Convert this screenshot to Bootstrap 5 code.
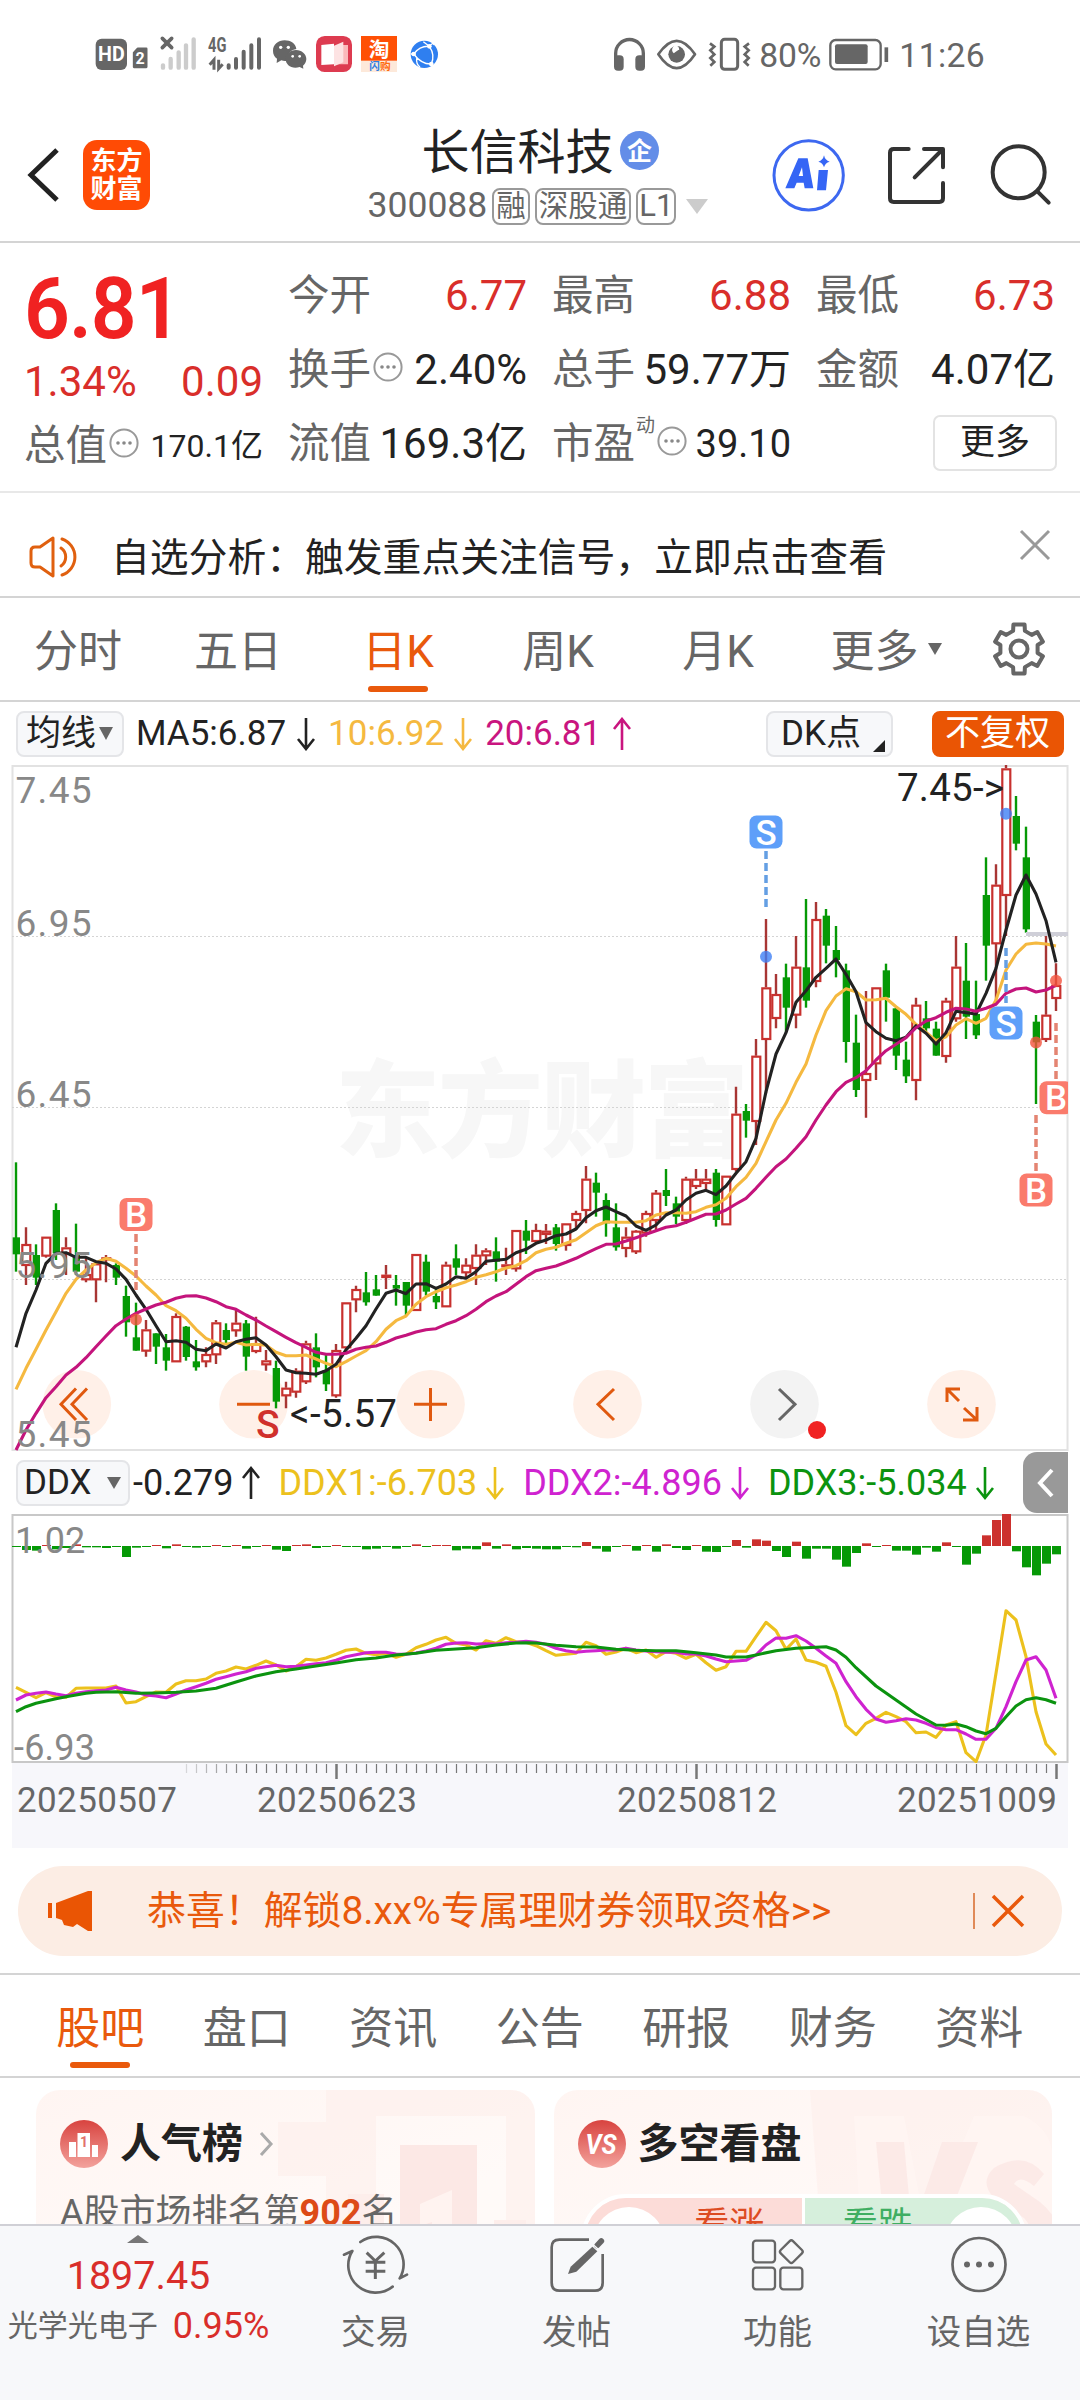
<!DOCTYPE html>
<html lang="zh-CN">
<head>
<meta charset="utf-8">
<meta name="viewport" content="width=device-width, initial-scale=1">
<title>长信科技 300088</title>
<link rel="stylesheet" href="https://cdn.jsdelivr.net/npm/bootstrap@5.3.0/dist/css/bootstrap.min.css">
<style>
:root{--ink:#222;--sub:#666;--up:#d92e2a;--brand:#e9590c;--line:#d4d4d4}
body{font-family:Roboto,"Noto Sans CJK SC",sans-serif;background:#fff;color:var(--ink);line-height:1;margin:0}
svg{display:block;overflow:visible;flex:none}
.page{width:1080px;height:2400px;overflow:hidden}
.nw{white-space:nowrap}
.c-sub{color:var(--sub)}.c-up{color:var(--up)}.c-brand{color:var(--brand)}
.sec{flex:none;border-bottom:2px solid var(--line)}
.statusbar{height:108px;flex:none}
.head{height:135px;display:grid;grid-template-columns:335px 1fr 335px}
.applogo{width:67px;height:70px;border-radius:14px;background:#ff4b05;color:#fff;font-size:26px;font-weight:700;line-height:28px}
.title{font-size:48px;height:54px;line-height:54px}
.tagbox{border:2px solid #999;border-radius:8px;height:37px;font-size:29.5px;line-height:32px;padding:0 2px;color:var(--sub)}
.code{font-size:35.5px;color:var(--sub)}
.tri{width:0;height:0;border:solid transparent;border-top-color:currentColor;border-bottom-width:0}
.quote{height:250px;padding:16px 26px 0 24px;display:grid;grid-template-columns:repeat(4,238px);column-gap:26px;border-bottom:2px solid #e8e8e8}
.qcell{height:74px;display:flex;align-items:center;justify-content:space-between;font-size:42px;white-space:nowrap}
.qcell>span:last-child:not(.bigprice){margin-right:-1px}
.qcell .lb{font-size:41.5px;color:var(--sub);display:flex;align-items:center}
.qcell .lb svg{margin:-6px 0 0 2px}
.bigprice{font-size:85px;font-weight:600;color:#f02222;transform:scaleX(.945);transform-origin:0 50%;letter-spacing:-1px;padding-top:8px}
.morebtn{width:124px;height:56px;border:2px solid #e3e3e3;border-radius:7px;font-size:35px;padding:0;line-height:50px;color:var(--ink);background:#fff}
.alertbar{height:105px;padding:0 30px 0 29px}
.alertbar .msg{font-size:38.8px;margin-left:31px;padding-top:28px}
.ktabs{height:104px}
.ktabs .nav-link,.btabs .nav-link{padding:6px 0 0;font-size:44px;color:var(--sub);height:100%;display:flex;align-items:center;justify-content:center;position:relative}
.ktabs .nav-link{width:160px;left:-2px}
.nav-link.active{color:var(--brand)!important}
.nav-link.active::after{content:"";position:absolute;left:50%;margin-left:-30px;bottom:8px;width:60px;height:6px;border-radius:3px;background:var(--brand)}
.indrow{height:63px;flex:none;font-size:35px;padding-left:16px;white-space:nowrap}
.chip{height:46px;border:2px solid #e4e5e8;border-radius:8px;background:#f7f8fa;display:flex;align-items:center}
.side{width:45px;height:61px;background:#999;border-radius:14px 0 0 14px}
.axisbox{height:85px;flex:none;margin:0 12px;background:#f7f7fb}
.promo{height:90px;margin:18px 18px 17px;border-radius:45px;background:#fcede4;flex:none;padding:0 38px 0 29px;color:var(--brand);font-size:38.9px}
.btabs{height:105px;padding:0 27px;border-top:2px solid var(--line)}
.btabs .nav-link{width:146.5px}
.feed{flex:1 1 0;min-height:0;overflow:hidden;padding:12px 28px 0 36px;gap:19px}
.fcard{width:499px;height:240px;border-radius:24px;background:linear-gradient(160deg,#fff5f2,#fffaf8 60%);position:relative;overflow:hidden;padding:30px 24px}
.fcard .deco{position:absolute;left:0;top:0}
.fcard .ttl{font-size:41px;font-weight:700;margin-left:12px}
.vote{width:446px;height:90px;border-radius:45px;border:4px solid #fff;overflow:hidden;font-size:35px;position:relative;margin:26px 0 0 3px;display:flex}
.vote div{flex:1;padding-top:10px}
.vote .up{background:#fcdcd8;color:#dd4b22;text-align:center;padding-left:72px;border-right:3px solid #fff}
.vote .dn{background:#d6efdc;color:#3fae62;text-align:center;padding-right:72px}
.vote i{position:absolute;width:72px;height:72px;border-radius:50%;background:#fff;top:9px}
.dock{height:176px;flex:none;background:#f7f8fa;border-top:2px solid #d0d0d6}
.dock .idx{width:275px;color:var(--up)}
.dock .item{width:201px;color:var(--sub);font-size:34.5px}
.dock svg{stroke:#666}
</style>
</head>
<body>
<svg width="0" height="0" class="position-absolute">
  <symbol id="dn" viewBox="0 0 20 34"><path d="M10 1V32M2 22L10 32L18 22" fill="none" stroke="currentColor" stroke-width="2.6"/></symbol>
  <symbol id="upa" viewBox="0 0 20 34"><path d="M10 33V2M2 12L10 2L18 12" fill="none" stroke="currentColor" stroke-width="2.6"/></symbol>
  <symbol id="info" viewBox="0 0 30 30"><circle cx="15" cy="15" r="13.6" fill="none" stroke="#999" stroke-width="2"/><g fill="#888"><circle cx="9" cy="15" r="1.8"/><circle cx="15" cy="15" r="1.8"/><circle cx="21" cy="15" r="1.8"/></g></symbol>
</svg>
<div class="page d-flex flex-column">

<header class="statusbar d-flex justify-content-between">
  <svg width="370" height="60" viewBox="0 0 1110 180" style="margin:25px 0 0 80px">
    <rect x="47" y="41" width="94" height="94" rx="18" fill="#666"/>
    <text x="94" y="109" font-size="58" font-weight="700" fill="#fff" text-anchor="middle" textLength="80" lengthAdjust="spacingAndGlyphs">HD</text>
    <path d="M173 71H199V126H162V83Z" fill="#666" stroke="#666" stroke-width="7" stroke-linejoin="round"/>
    <text x="180" y="116" font-size="48" font-weight="700" fill="#fff" text-anchor="middle">2</text>
    <path d="M247 40L275 68M275 40L247 68" stroke="#666" stroke-width="11" stroke-linecap="round"/>
    <g stroke="#ccc" stroke-width="13" stroke-linecap="round"><path d="M249 121V128M272 102V128M296 82V128M318 61V128M341 43V128"/></g>
    <text x="384" y="80" font-size="58" font-weight="700" fill="#666" textLength="55" lengthAdjust="spacingAndGlyphs">4G</text>
    <path d="M389 119L402 104V134M416 104V131L428 118" fill="none" stroke="#666" stroke-width="9"/>
    <g stroke="#666" stroke-width="12" stroke-linecap="round"><path d="M446 121V128M468 102V128M491 80V128M514 61V128M537 43V128"/></g>
    <path d="M614 46c-20 0-35 13-35 31 0 10 4 18 12 24l-1 13 14-8c6 2 13 2 17 1 0-22 13-33 28-35-2-16-17-26-35-26Z" fill="#666"/>
    <path d="M648 75c17 0 31 12 31 27 0 9-5 16-10 20l1 9-11-5c-24 7-42-6-42-24 0-15 14-27 31-27Z" fill="#666"/>
    <g fill="#fff"><circle cx="602" cy="67" r="5"/><circle cx="625" cy="67" r="5"/><circle cx="638" cy="94" r="4"/><circle cx="659" cy="94" r="4"/></g>
    <rect x="708" y="33" width="108" height="108" rx="26" fill="#dd3b50"/>
    <path d="M724 60L762 56V118L724 120Z" fill="#fff"/><path d="M778 60H804V118H768Z" fill="#fbb9bb"/><path d="M762 62L790 50V112L762 124Z" fill="#fde3e3"/>
    <rect x="843" y="33" width="108" height="108" fill="#fde9da"/><rect x="843" y="33" width="108" height="74" fill="#ff5005"/>
    <text x="897" y="95" font-size="62" font-weight="700" fill="#fff" text-anchor="middle">淘</text>
    <text x="868" y="136" font-size="32" font-weight="700" fill="#2f7de0">闪</text><text x="900" y="136" font-size="32" font-weight="700" fill="#ff6a10">购</text>
    <circle cx="1033" cy="88" r="41" fill="#2f7ff0"/>
    <g fill="none" stroke="#fff" stroke-width="4"><path d="M1001 87Q1020 62 1048 64Q1066 90 1054 117Q1024 118 1001 87M1048 64Q1060 50 1062 60M1048 64L1030 50M1001 87H992M1054 117L1056 124M1010 100Q1008 118 1020 126"/></g>
    <g fill="#fff"><circle cx="1048" cy="64" r="7"/><circle cx="1001" cy="87" r="7"/><circle cx="1054" cy="117" r="7"/></g>
  </svg>
  <svg width="413" height="60" viewBox="0 0 1239 180" style="margin:20px 87px 0 0">
    <g fill="none" stroke="#666">
      <path d="M107 130V100a41 41 0 0 1 83 0V130" stroke-width="10"/>
      <path d="M235 103Q290 22 345 103Q290 186 235 103Z" stroke-width="8" stroke-linejoin="round"/>
      <rect x="424" y="58" width="49" height="90" rx="10" stroke-width="9"/>
      <path d="M390 70l13 10-12 11 12 12-12 11 12 12-12 11M507 70l-13 10 12 11-12 12 12 11-12 12 12 11" stroke-width="8"/>
      <rect x="751" y="60" width="151" height="88" rx="16" stroke-width="7"/>
      <path d="M919 82V126" stroke-width="11"/>
    </g>
    <g fill="#666"><rect x="102" y="106" width="29" height="46" rx="12"/><rect x="166" y="106" width="29" height="46" rx="12"/><circle cx="290" cy="103" r="25"/><rect x="765" y="73" width="98" height="59" rx="6"/></g>
    <path d="M283 98a8 10 0 1 1 12-8" fill="#fff" stroke="#fff" stroke-width="5"/>
    <g fill="#666" font-size="101"><text x="538" y="140" textLength="186">80%</text><text x="958" y="140" textLength="256">11:26</text></g>
  </svg>
</header>

<div class="sec head align-items-center">
  <div class="d-flex align-items-center" style="padding-left:27px">
    <svg width="34" height="54"><path d="M30 2L4 27L30 52" fill="none" stroke="#222" stroke-width="5"/></svg>
    <div class="applogo d-flex flex-column align-items-center justify-content-center" style="margin-left:22px"><span>东方</span><span>财富</span></div>
  </div>
  <div class="d-flex flex-column align-items-center">
    <div class="d-flex align-items-center nw title">长信科技
      <svg width="39" height="39" viewBox="0 0 39 39" style="margin:-5px 0 0 6px"><circle cx="19.500" cy="19.500" r="19.500" fill="#638de8"/><text x="19.500" y="29" font-size="25" font-weight="700" fill="#fff" text-anchor="middle">企</text></svg>
    </div>
    <div class="d-flex align-items-center nw" style="margin:8px 4px 0 0">
      <span class="code">300088</span><span class="tagbox" style="margin-left:5px">融</span><span class="tagbox" style="margin-left:5px">深股通</span><span class="tagbox" style="margin-left:5px;padding:0 1px;font-size:31px">L1</span>
      <span class="tri" style="border-width:15px 11px 0;color:#ccc;margin-left:10px"></span>
    </div>
  </div>
  <svg width="335" height="134" viewBox="495 264 1005 402">
    <circle cx="686" cy="466" r="104" fill="none" stroke="#3d68f0" stroke-width="9"/>
    <path d="M655 415H683L700 505H674L671 488H650L643 505H616ZM666 442L656 468H669ZM716 450H744L738 511H711Z" fill="#3565f5" fill-rule="evenodd"/>
    <path d="M732 406Q735 421 749 425Q735 429 732 442Q729 429 715 425Q729 421 732 406Z" fill="#3565f5"/>
    <g fill="none" stroke="#333" stroke-width="12" stroke-linecap="round" stroke-linejoin="round">
      <path d="M986 387H941Q930 387 930 398V535Q930 546 941 546H1078Q1089 546 1089 535V489M1032 387H1089V442M1086 390L1004 472"/>
      <circle cx="1316" cy="457" r="78"/><path d="M1372 514L1406 548"/>
    </g>
  </svg>
</div>

<section class="quote" style="flex:none">
  <div>
    <div class="qcell" style="height:92px"><span class="bigprice">6.81</span></div>
    <div class="qcell c-up" style="height:62px"><span>1.34%</span><span>0.09</span></div>
    <div class="qcell" style="height:62px;margin-top:2px"><span class="lb">总值<svg width="30" height="30"><use href="#info"/></svg></span><span style="font-size:32px">170.1亿</span></div>
  </div>
  <div>
    <div class="qcell"><span class="lb">今开</span><span class="c-up">6.77</span></div>
    <div class="qcell"><span class="lb">换手<svg width="30" height="30"><use href="#info"/></svg></span><span>2.40%</span></div>
    <div class="qcell"><span class="lb">流值</span><span>169.3亿</span></div>
  </div>
  <div>
    <div class="qcell"><span class="lb">最高</span><span class="c-up">6.88</span></div>
    <div class="qcell"><span class="lb">总手</span><span>59.77万</span></div>
    <div class="qcell"><span class="lb">市盈<small style="font-size:19px;margin:-38px 0 0 1px">动</small><svg width="30" height="30"><use href="#info"/></svg></span><span style="font-size:38px">39.10</span></div>
  </div>
  <div>
    <div class="qcell"><span class="lb">最低</span><span class="c-up">6.73</span></div>
    <div class="qcell"><span class="lb">金额</span><span>4.07亿</span></div>
    <div class="qcell justify-content-end"><button class="btn morebtn" style="margin:-3px -3px 0 0">更多</button></div>
  </div>
</section>

<section class="sec alertbar d-flex align-items-center">
  <svg width="51" height="44" viewBox="0 0 51 44" fill="none" stroke="#e0600f" stroke-width="3" stroke-linejoin="round" stroke-linecap="round" style="margin-top:25px"><path d="M24 3L11 12H6Q2 12 2 16V28Q2 32 6 32H11L24 41ZM32 13A11 11 0 0 1 32 31M33 4A19 19 0 0 1 33 40"/></svg>
  <span class="msg nw">自选分析：触发重点关注信号，立即点击查看</span>
  <svg class="ms-auto" width="30" height="30"><path d="M1 1L29 29M29 1L1 29" stroke="#999" stroke-width="3"/></svg>
</section>

<nav class="sec ktabs nav flex-nowrap">
  <a class="nav-link">分时</a><a class="nav-link">五日</a><a class="nav-link active">日K</a><a class="nav-link">周K</a><a class="nav-link">月K</a>
  <a class="nav-link" style="padding-left:16px">更多<span class="tri" style="border-width:12px 7.500px 0;margin:-6px 0 0 9px"></span></a>
  <div class="d-flex align-items-center justify-content-center flex-fill"><svg width="52" height="52" viewBox="-26 -26 52 52" fill="none" stroke="#666" stroke-width="4" stroke-linejoin="round" style="margin:-1px 3px 0 0"><path d="M-5.600-24.400L5.600-24.400L5.900-18.100L12.700-14.100L18.300-17L23.900-7.300L18.600-4V4L23.900 7.300L18.300 17L12.700 14.100L5.900 18.100L5.600 24.400H-5.600L-5.900 18.100L-12.700 14.100L-18.300 17L-23.900 7.300L-18.600 4V-4L-23.900-7.300L-18.300-17L-12.700-14.100L-5.900-18.100Z"/><circle r="8.500"/></svg></div>
</nav>

<div class="indrow d-flex align-items-center">
  <span class="chip" style="width:108px;padding-left:8px">均线<span class="tri" style="border-width:13px 7.500px 0;color:#666;margin-left:3px"></span></span>
  <span style="margin-left:12px">MA5:6.87</span><svg width="20" height="34" style="margin-left:10px"><use href="#dn"/></svg>
  <span style="margin-left:12px;color:#f5b940">10:6.92</span><svg width="20" height="34" style="margin-left:9px;color:#f5b940"><use href="#dn"/></svg>
  <span style="margin-left:12px;color:#c9157f">20:6.81</span><svg width="20" height="34" style="margin-left:11px;color:#c9157f"><use href="#upa"/></svg>
  <span class="chip ms-auto" style="width:127px;padding-left:13px">DK点<span style="width:0;height:0;border-left:12px solid transparent;border-bottom:12px solid #222;margin:24px 0 0 12px"></span></span>
  <span class="chip" style="width:132px;margin:0 16px 0 39px;background:#ea5504;border-color:#ea5504;color:#fff;padding-left:11px">不复权</span>
</div>

<svg id="kline" width="1080" height="686" viewBox="0 765 1080 686" font-size="37"></svg>

<div class="indrow d-flex align-items-center" style="font-size:36px">
  <span class="chip" style="width:114px;padding-left:6px;font-size:35px">DDX<span class="tri" style="border-width:12px 7px 0;color:#666;margin-left:15px"></span></span>
  <span style="margin-left:3px">-0.279</span><svg width="20" height="36" style="margin-left:8px"><use href="#upa"/></svg>
  <span style="margin-left:17px;color:#ecc11d">DDX1:-6.703</span><svg width="20" height="36" style="margin-left:8px;color:#ecc11d"><use href="#dn"/></svg>
  <span style="margin-left:18px;color:#cf23d0">DDX2:-4.896</span><svg width="20" height="36" style="margin-left:8px;color:#cf23d0"><use href="#dn"/></svg>
  <span style="margin-left:18px;color:#0b930f">DDX3:-5.034</span><svg width="20" height="36" style="margin-left:8px;color:#0b930f"><use href="#dn"/></svg>
  <span class="side ms-auto d-flex align-items-center justify-content-center" style="margin-right:12px"><svg width="16" height="28"><path d="M14 1L2 14L14 27" fill="none" stroke="#fff" stroke-width="4"/></svg></span>
</div>
<svg id="ddx" width="1080" height="249" viewBox="0 1514 1080 249" font-size="36"></svg>
<div class="axisbox"><svg id="axis" width="1056" height="85" viewBox="12 1763 1056 85" font-size="35"></svg></div>

<div class="promo d-flex align-items-center">
  <svg width="46" height="40" viewBox="0 0 46 40" fill="#ea5504"><path d="M1 12h4v15H1zM9 12L41 0h4v40h-4L30 33 26 36 17 34 15 29 9 27Z"/></svg>
  <span class="nw" style="margin-left:54px">恭喜！解锁8.xx%专属理财券领取资格&gt;&gt;</span>
  <span class="ms-auto" style="width:2px;height:36px;background:#e08a58"></span>
  <svg width="32" height="32" style="margin-left:17px"><path d="M1 1L31 31M31 1L1 31" stroke="#e9590c" stroke-width="3.500"/></svg>
</div>

<nav class="sec btabs nav flex-nowrap">
  <a class="nav-link active">股吧</a><a class="nav-link">盘口</a><a class="nav-link">资讯</a><a class="nav-link">公告</a><a class="nav-link">研报</a><a class="nav-link">财务</a><a class="nav-link">资料</a>
</nav>

<main class="feed d-flex">
  <div class="fcard">
    <svg class="deco" width="499" height="240"><g fill="#fdeeeb"><path d="M290 0H499V240H470V26H340V240H290Z" opacity=".6"/><path d="M242 32H290V86H242Z" opacity=".6"/><rect x="364" y="55" width="77" height="185" fill="#fce8e5"/><rect x="312" y="104" width="36" height="140"/><rect x="458" y="130" width="32" height="110"/></g><path d="M384 114L416 100V240H396V132L384 136Z" fill="#fff3f0"/></svg>
    <div class="d-flex align-items-center position-relative">
      <svg width="48" height="48"><defs><linearGradient id="rg" x2="0" y2="1"><stop stop-color="#d8433f"/><stop offset="1" stop-color="#f3a29c"/></linearGradient></defs><circle cx="24" cy="24" r="24" fill="url(#rg)"/><path d="M9 22H16V37H9ZM17.500 13H30V37H17.500ZM32 25H38V37H32Z" fill="#fff"/><text x="24" y="27" font-size="14" font-weight="700" text-anchor="middle" fill="#e2726c">1</text></svg>
      <span class="ttl">人气榜</span>
      <svg width="14" height="24" style="margin-left:16px"><path d="M2 1L12 12L2 23" fill="none" stroke="#aaa" stroke-width="3"/></svg>
    </div>
    <div class="c-sub nw position-relative" style="font-size:36px;margin-top:27px">A股市场排名第<b style="color:#dd4b17">902</b>名</div>
  </div>
  <div class="fcard">
    <svg class="deco" width="499" height="240"><path d="M256 0H499V240H274Z" fill="#fdeeeb" opacity=".6"/><g opacity=".8"><path d="M300 26H350L372 140L420 26H470Q499 40 499 70V200H310Z" fill="#fff5f2"/></g><path d="M322 52H350L358 140L388 52H424L376 175H334ZM490 84Q470 60 440 78Q425 92 440 108L470 128Q486 145 468 165Q448 184 410 170L400 196Q460 220 494 180Q520 140 486 112L460 94Q466 84 480 96Z" fill="#fce8e5" opacity=".85"/></svg>
    <div class="d-flex align-items-center position-relative">
      <svg width="48" height="48"><circle cx="24" cy="24" r="24" fill="url(#rg)"/><text x="23" y="34" font-size="28" font-weight="700" font-style="italic" text-anchor="middle" fill="#fff" textLength="31" lengthAdjust="spacingAndGlyphs">VS</text></svg>
      <span class="ttl">多空看盘</span>
    </div>
    <div class="vote"><div class="up">看涨</div><div class="dn">看跌</div><i style="left:8px"></i><i style="right:6px"></i></div>
  </div>
</main>

<footer class="dock d-flex">
  <div class="idx d-flex flex-column align-items-center nw" style="padding-top:9px">
    <span style="width:0;height:0;border:solid transparent;border-width:0 11px 8px;border-bottom-color:#777"></span>
    <span style="font-size:39.500px;margin-top:13px;padding-left:2px">1897.45</span>
    <span class="d-flex align-items-center" style="margin-top:12px;font-size:36px;gap:15px;padding-left:2px"><span class="c-sub" style="font-size:30px">光学光电子</span>0.95%</span>
  </div>
  <div class="item d-flex flex-column align-items-center">
    <svg width="68" height="62" viewBox="36 24 204 186" fill="none" stroke-width="8" stroke-linecap="round" stroke-linejoin="round" style="margin:8px 0 19px"><path d="M91 48A82 82 0 0 1 209 157L231 146M188 182A82 82 0 0 1 67 75L42 86"/><path d="M110 80L136 105L163 80M107 109H166M107 136H166M136 105V159" stroke-linecap="butt" stroke-width="9"/></svg>交易</div>
  <div class="item d-flex flex-column align-items-center">
    <svg width="56" height="62" viewBox="657 24 168 186" fill="none" stroke-width="8" stroke-linejoin="round" style="margin:8px 0 19px"><path d="M777 41H688Q665 41 665 64V170Q665 194 688 194H795Q818 194 818 170V84"/><path d="M787 62L802 76L739 137L714 144L722 122Z" fill="#666" stroke="none"/><path d="M801 59L814 45" stroke-width="17" stroke-linecap="round"/><path d="M790 56L808 73" stroke="#f7f8fa" stroke-width="4"/></svg>发帖</div>
  <div class="item d-flex flex-column align-items-center">
    <svg width="54" height="62" viewBox="1264 24 162 186" fill="none" stroke-width="7" stroke-linejoin="round" style="margin:8px 0 19px"><rect x="1270" y="44" width="66" height="65" rx="9"/><rect x="1270" y="125" width="66" height="65" rx="9"/><rect x="1352" y="125" width="66" height="65" rx="9"/><rect x="1359" y="51" width="52" height="52" rx="7" transform="rotate(45 1385 77)"/></svg>功能</div>
  <div class="item d-flex flex-column align-items-center">
    <svg width="56" height="62" viewBox="0 0 56 62" fill="none" stroke-width="2.700" style="margin:8px 0 19px"><circle cx="28" cy="30.500" r="26.500"/><g fill="#666" stroke="none"><circle cx="16" cy="30.500" r="3"/><circle cx="28" cy="30.500" r="3"/><circle cx="40" cy="30.500" r="3"/></g></svg>设自选</div>
</footer>
</div>

<script src="https://cdn.jsdelivr.net/npm/bootstrap@5.3.0/dist/js/bootstrap.bundle.min.js"></script>
<script>
// Session i sits at x = 16 + 10 i. Values are thirds of a pixel below each block's origin.
const X = i => 16 + 10 * i, UP = '#c8312e', DN = '#069906';
const blocks = [
 [0, 1120, `g127,352,403,455 r322,372,435,495 g373,405,473,495 r350,350,407,413 g250,270,400,420 r352,382,400,465 g311,405,455,465 r410,462,478,487 r425,430,478,547 r405,412,418,487 g430,435,473,495 g497,528,607,650 g548,652,692,692 r600,628,692,710 g640,640,680,732 g642,682,722,752 r580,588,724,724 g618,620,711,722 g660,724,742,752 r682,702,724,742 r600,607,703,732 g610,630,660,672 r568,608,631,650 g600,610,710,752 r590,670,693,700 r690,721,733,752 g722,744,845,865 r785,803,826,865 r745,752,815,833 r662,670,784,792 g640,682,742,772 g700,750,793,813 r672,690,826,833 r547,547,682,690 r497,507,538,577 g456,517,547,557 g465,508,527,527 r435,464,471,507 g465,495,506,557 g486,486,557,587 r402,402,570,570 g404,425,515,527 g505,528,547,567 r425,434,559,559 g373,415,443,465 r415,434,457,475 r373,404,444,495 r385,391,406,435 g352,394,425,485 r383,433,436,465 r330,330,445,455 g300,332,362,402 r311,330,363,372`],
 [53, 1080, `r432,452,462,492 g432,442,492,512 r430,430,495,512 r392,399,420,450 r258,296,390,430 g278,308,338,410 g340,360,430,470 g370,442,502,512 r442,470,504,532 r450,452,514,522 r392,399,458,470 r330,338,420,450 g267,330,348,378 g350,370,410,432 r290,296,420,432 r267,296,318,327 r267,296,309,327 g267,278,420,440 r287,287,433,433 r20,101,267,275 g72,93,122,173`],
 [74, 750, `r867,917,1113,1185 r507,712,867,1030 r672,732,804,835 g641,682,773,845 r558,650,794,835 g447,652,752,773 r456,507,693,712 g477,497,587,640 g528,600,630,682 g641,661,876,938 g794,878,1020,1041 r723,969,990,1103 r712,712,940,990 g641,661,743,815 g773,775,917,960 g875,929,979,999 r743,764,990,1051 g753,805,835,845 g815,836,917,917 r743,752,918,938 r558,650,805,815 g579,692,800,867 g692,792,856,867 g322,435,587,692 r343,404,580,760 r45,55,435,558 g138,198,281,301 g230,322,538,548 g795,815,877,1062 r558,794,867,876 r640,705,744,783`]];
const lines = {
 '#f5b940': [[0,1120,[808,745,688,630,575,520,478,450,428,415,424,445,468,498,525,557,572,595,628,655,668,673,667,675,673,676,697,707,707,705,717,730,740,725,708,692,665,628,602,588,553,530,515,503,495,485,472,464,455,444,437,422,398]],
  [53,1080,[508,502,490,479,458,437,425,427,427,427,422,405,398,398,400,395,382,374,355,320,292,250,185,120,70]],
  [78,750,[997,942,855,782,738,716,725,750,749,745,770,793,823,847,872,860,825,806,820,805,750,660,612,583,579,582,588]]],
 '#222222': [[0,1120,[682,580,510,430,400,398,412,412,425,430,447,478,525,568,617,665,662,667,688,692,672,684,665,658,653,675,710,750,758,760,763,752,733,690,655,617,567,520,510,521,492,491,505,492,470,475,455,424,421,418,398,388,370]],
  [53,1080,[480,467,462,447,413,392,381,395,408,438,451,435,405,390,360,340,331,344,318,280,245,175]],
  [75,750,[1025,912,848,757,722,682,655,627,673,725,818,845,865,872,862,827,850,882,848,784,788,792,730,655,540,435,375,432,512,637]]],
 '#c4147c': [[0,1120,[990,930,880,833,800,765,742,713,680,648,617,597,580,567,555,547,535,528,527,534,545,560,568,585,600,618,635,652,668,682,697,703,703,700,688,682,678,667,654,646,636,629,626,613,602,587,568,545,528,515,493,470,452]],
  [53,1080,[565,558,547,535,520,506,493,492,483,473,463,452,442,437,427,415,403,402,390,372,355,325,292,260,237,205,170,120,75,35]],
  [83,750,[997,983,962,930,902,883,863,833,813,803,787,775,777,784,775,763,730,717,714,726,720,706]]]};
let k = '<rect x="12.500" y="766" width="1055" height="684" fill="none" stroke="#e2e2e2" stroke-width="2"/>';
k += '<text x="335" y="1148" font-size="105" font-weight="900" textLength="414" fill="#f7f7f7">东方财富</text>';
for (const y of [936.5, 1107.5, 1279.5]) k += `<path d="M12 ${y}H1068" stroke="#d4d4d4" stroke-dasharray="2 2"/>`;
const rings = [76.8, 253.5, 430.5, 607.5, 784.5, 961.5];
rings.forEach((x, i) => k += `<circle cx="${x}" cy="1404.300" r="34.300" fill="${i == 4 ? '#f3f3f3' : '#fff0e8'}"/>`);
for (const [s, o, t] of blocks) t.split(' ').forEach((c, n) => {
  const x = X(s + n), [h, a, b, l] = c.slice(1).split(',').map(v => o + v / 3);
  if (c[0] == 'g') k += `<path d="M${x} ${h}V${l}" stroke="${DN}" stroke-width="2.400"/><rect x="${x - 3.3}" y="${a}" width="7.300" height="${b - a}" fill="${DN}"/>`;
  else k += `<path d="M${x} ${h}V${a}M${x} ${b}V${l}" stroke="#a83634" stroke-width="2.400"/><rect x="${x - 3.7}" y="${a + 1}" width="8" height="${Math.max(b - a - 1, 1)}" fill="#fff" stroke="${UP}" stroke-width="2.200"/>`;
});
k += '<path d="M1026 934H1068" stroke="#cfcfd8" stroke-width="4"/>';
for (const col in lines) {
  const p = lines[col].flatMap(([s, o, v]) => v.map((y, n) => `${X(s + n)},${(o + y / 3).toFixed(1)}`));
  k += `<polyline points="${p.join(' ')}" fill="none" stroke="${col}" stroke-width="3.100" stroke-linejoin="round"/>`;
}
for (const [t, y] of [['7.45', 803], ['6.95', 936], ['6.45', 1107], ['5.95', 1278], ['5.45', 1446.5]]) k += `<text x="15.500" y="${y}" fill="#888" textLength="76">${t}</text>`;
k += '<text x="290" y="1426.500" font-size="38.500" fill="#222" textLength="107">&lt;-5.57</text><text x="897" y="801" font-size="38.500" fill="#222" textLength="107">7.45-&gt;</text>';
k += '<text x="256" y="1438" font-size="39" font-weight="500" fill="#d0302c">S</text>';
k += `<g fill="none" stroke="#e0590f" stroke-width="3"><path d="M76 1388.500L61 1404.300L76 1420M87 1388.500L72 1404.300L87 1420M237 1404.300H270M414 1404.300H447M430.500 1388V1421M614 1389L598 1404.300L614 1420M960 1389H947V1402M947 1389L959 1401M964 1408L977 1420M977 1407V1420H963"/><path d="M779 1389L795 1404.300L779 1420" stroke="#666"/></g><circle cx="817" cy="1430" r="9" fill="#f02222"/>`;
const mark = (t, x, y, d1, d2, dy) => {
  const c = t == 'B' ? '#fa7b6c' : '#5e9ff9', d = t == 'B' ? '#e48472' : '#649fe3';
  k += `<path d="M${x} ${d1}V${d2}" stroke="${d}" stroke-width="3.500" stroke-dasharray="8 4"/><circle cx="${x}" cy="${dy}" r="6" fill="${t == 'B' ? '#f4533c' : '#3f80f5'}" opacity=".8"/><rect x="${x - 16.5}" y="${y - 16.5}" width="33" height="33" rx="7" fill="${c}"/><text x="${x}" y="${y + 12.5}" font-size="35" font-weight="500" fill="#fff" text-anchor="middle">${t}</text>`;
};
k += '<clipPath id="cp"><rect x="0" y="760" width="1068" height="700"/></clipPath><g clip-path="url(#cp)">';
mark('B', 136, 1214.5, 1234, 1290, 1319.5);
mark('S', 766, 832, 851, 907, 956.7);
mark('S', 1006, 1023, 948, 1003, 813.7);
mark('B', 1056, 1097.7, 1023, 1079, 980.7);
mark('B', 1036, 1190, 1115, 1171, 1042.5);
document.getElementById('kline').innerHTML = k + '</g>';

// DDX histogram and its three averages
const bars = [-2,-12,-14,3,-10,-6,5,-4,-4,-6,-2,-33,-5,-3,3,-7,5,-3,-5,-3,2,-3,3,-8,-2,3,-11,-15,3,5,-6,-3,3,-2,-2,-10,-8,-3,-8,-3,5,-2,3,3,-13,-8,-10,11,-8,5,-10,-6,-8,-10,-10,-2,-4,12,-8,-17,-2,3,-14,3,-17,5,-6,-12,3,-17,-18,-2,18,-5,20,16,-15,-33,13,-38,-8,-8,-41,-62,-21,8,-2,3,-14,-14,-26,-5,-17,11,-2,-56,-23,32,78,96,-16,-64,-88,-53,-25];
let d = '<rect x="12.500" y="1515" width="1055" height="247" fill="none" stroke="#c8c8c8" stroke-width="2"/>';
bars.forEach((v, i) => { const h = Math.max(Math.abs(v) / 3, 1); d += `<rect x="${X(i) - 4}" y="${v > 0 ? 1546 - h : 1546}" width="9" height="${h}" fill="${v > 0 ? '#cc312e' : '#069906'}"/>`; });
const seq = a => a.map((v, i) => [i, v]);
const avg = {
 '#ecc11d': seq([742,757,773,758,770,772,745,744,744,744,738,789,785,770,756,757,732,722,722,717,700,693,681,687,676,663,675,693,680,658,661,654,643,631,627,640,644,640,652,643,623,613,600,592,610,615,630,602,610,593,605,607,617,632,646,643,640,607,617,643,636,625,638,630,652,635,640,655,643,668,691,680,634,634,590,547,572,628,597,660,667,679,757,857,884,850,835,817,830,845,878,876,892,855,845,938,965,885,700,512,540,650,815,912,945]),
 '#cf23d0': seq([780,765,760,756,762,767,760,755,752,750,742,750,756,765,768,773,762,750,740,730,718,710,702,695,685,680,676,680,679,675,671,668,661,650,644,638,637,637,642,643,639,633,625,613,609,608,612,611,612,608,607,604,607,613,625,632,637,634,632,630,630,625,630,633,635,637,637,642,642,648,657,665,663,661,645,615,594,595,587,603,625,648,670,725,770,808,837,847,842,836,840,850,863,869,869,882,898,898,865,800,725,660,650,690,775]),
 '#0b930f': [[0,815],[1,800],[2,790],[3,783],[4,776],[5,770],[6,765],[7,760],[8,757],[9,756],[10,755],[12,760],[14,759],[16,757],[18,753],[20,745],[22,726],[24,708],[26,695],[28,687],[30,678],[32,669],[34,659],[36,654],[38,645],[40,640],[42,631],[44,627],[46,623],[48,615],[50,609],[51,608],[52,609],[54,616],[56,620],[58,621],[60,628],[62,631],[64,632],[66,632],[68,638],[70,645],[71,651],[73,651],[74,645],[76,632],[78,625],[80,622],[81,620],[82,630],[83,652],[84,683],[86,738],[88,780],[90,822],[92,855],[93,856],[94,852],[95,860],[96,873],[97,881],[98,865],[99,830],[100,798],[101,779],[102,773],[103,779],[104,790]]};
for (const c in avg) d += `<polyline points="${avg[c].map(([i, v]) => X(i) + ',' + (1440 + v / 3).toFixed(1)).join(' ')}" fill="none" stroke="${c}" stroke-width="3.100" stroke-linejoin="round"/>`;
d += '<text x="15" y="1552.500" fill="#888">1.02</text><text x="14" y="1759.500" fill="#888" textLength="81">-6.93</text>';
document.getElementById('ddx').innerHTML = d;

let a = '';
for (let i = 17; i < 105; i++) { const m = i == 32 || i == 68 || i == 104; a += `<path d="M${X(i) + .5} 1764V${m ? 1779 : 1773}" stroke="#777" stroke-width="${m ? 2.5 : 1.2}" opacity="${Math.min(1, (i - 15) / 8)}"/>`; }
for (const [x, t] of [[17, '20250507'], [257, '20250623'], [617, '20250812'], [897, '20251009']]) a += `<text x="${x}" y="1811.500" fill="#666" textLength="160">${t}</text>`;
document.getElementById('axis').innerHTML = a;
</script>
</body>
</html>
